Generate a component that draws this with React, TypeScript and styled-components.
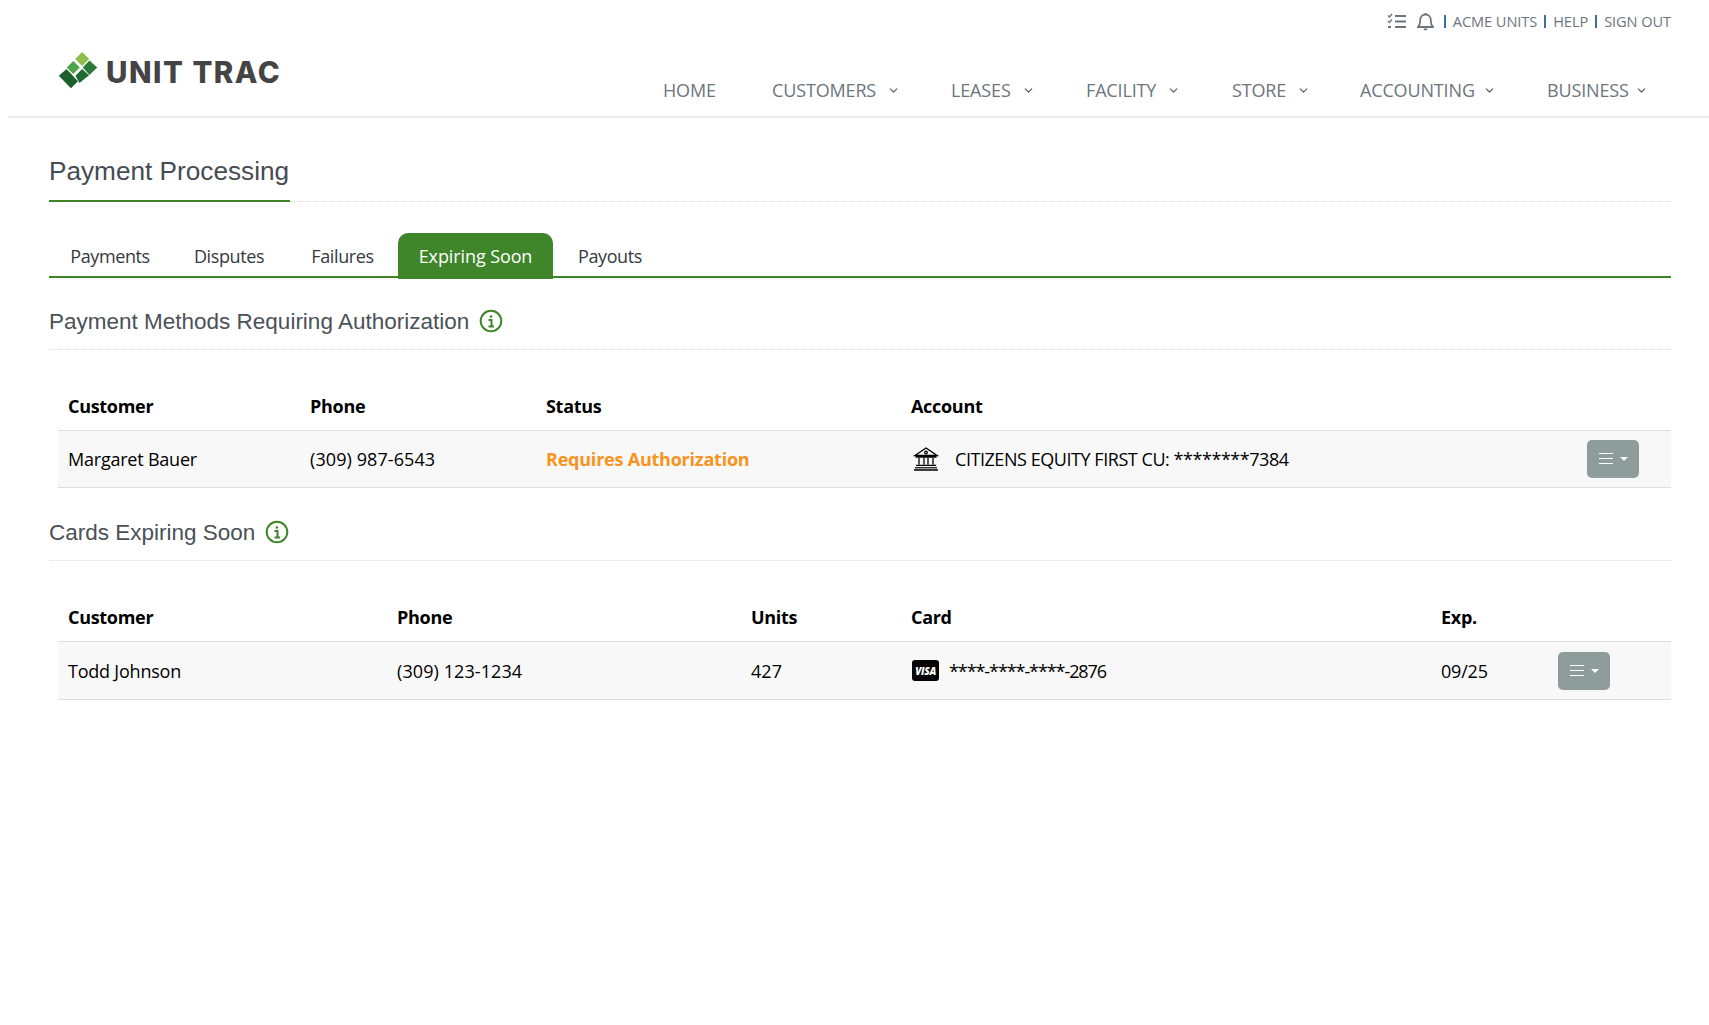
import styled, { createGlobalStyle } from "styled-components";
import { ChevronDown } from "lucide-react";

const GREEN = "#3e8629";
const BODY_FONT = '"Open Sans", "Noto Sans", sans-serif';
const HEAD_FONT = '"Liberation Sans", Arial, sans-serif';

const GlobalStyle = createGlobalStyle`
  html, body {
    margin: 0;
    padding: 0;
    background: #ffffff;
  }
  body {
    font-family: ${BODY_FONT};
    color: #000000;
  }
`;

const Page = styled.div`
  width: 1709px;
  height: 1025px;
  padding-left: 8px;
  box-sizing: border-box;
  overflow: hidden;
`;

const Header = styled.header`
  height: 116px;
  border-bottom: 2px solid #ececec;
  display: flex;
  flex-direction: column;
`;

const TopBar = styled.div`
  height: 42px;
  padding-right: 38px;
  display: flex;
  justify-content: flex-end;
  align-items: center;
  font-size: 14.6px;
  letter-spacing: -0.08px;
  color: #6c757d;
`;

const TopIcon = styled.svg`
  display: block;
  margin-right: 10px;
`;

const Pipe = styled.span`
  width: 2px;
  height: 13px;
  background: #3f6f9f;
  margin-right: 7px;
`;

const TopLink = styled.span`
  margin-right: 7px;
  &:last-child {
    margin-right: 0;
  }
`;

const MainRow = styled.div`
  flex: 1;
  display: flex;
  justify-content: space-between;
`;

const Logo = styled.div`
  margin: 9px 0 0 50px;
  height: 42px;
  display: flex;
  align-items: center;
  gap: 8px;
  font-family: "Inter", sans-serif;
  font-weight: 800;
  font-size: 29.5px;
  letter-spacing: 1.5px;
  color: #444444;
`;

const Nav = styled.nav`
  display: flex;
  align-items: flex-start;
  padding: 35px 58px 0 0;
`;

const NavItem = styled.div<{ $w: number; $gap: number }>`
  width: ${(p) => p.$w}px;
  display: flex;
  align-items: center;
  gap: ${(p) => p.$gap}px;
  font-size: 18px;
  line-height: 26px;
  letter-spacing: -0.15px;
  color: #6c757d;
  svg {
    color: #555555;
    flex: none;
  }
`;

const Content = styled.main`
  margin: 0 38px 0 41px;
`;

const TitleRow = styled.div`
  height: 84px;
  border-bottom: 1px dotted #dcdcdc;
  box-sizing: border-box;
  display: flex;
  align-items: flex-end;
`;

const Title = styled.h1`
  margin: 0 0 -1px;
  height: 44px;
  padding-right: 1px;
  border-bottom: 2px solid ${GREEN};
  font-family: ${HEAD_FONT};
  font-weight: 400;
  font-size: 26.2px;
  line-height: 30px;
  color: #454c53;
`;

const Tabs = styled.div`
  margin-top: 29px;
  height: 47px;
  border-bottom: 2px solid ${GREEN};
  box-sizing: border-box;
  display: flex;
  align-items: flex-end;
`;

const Tab = styled.div<{ $active?: boolean; $w: number }>`
  width: ${(p) => p.$w}px;
  height: 46px;
  margin-bottom: -3px;
  border-radius: 10px 10px 0 0;
  display: flex;
  justify-content: center;
  align-items: center;
  font-size: 18px;
  letter-spacing: ${(p) => (p.$active ? "-0.1px" : "-0.4px")};
  color: ${(p) => (p.$active ? "#ffffff" : "#343a40")};
  background: ${(p) => (p.$active ? GREEN : "transparent")};
`;

const SectionHead = styled.div<{ $top: number }>`
  margin-top: ${(p) => p.$top}px;
  height: 42px;
  border-bottom: 1px dotted #dcdcdc;
  box-sizing: border-box;
  display: flex;
  align-items: flex-start;
  gap: 10px;
  font-family: ${HEAD_FONT};
  font-size: 22.5px;
  line-height: 28px;
  color: #4a5157;
`;

const InfoIcon = styled.svg`
  display: block;
  margin-top: 1px;
`;

const Table = styled.table<{ $top: number }>`
  margin: ${(p) => p.$top}px 0 0 9px;
  width: calc(100% - 9px);
  border-collapse: collapse;
  table-layout: fixed;
  font-size: 18px;
  letter-spacing: -0.3px;
`;

const Th = styled.th<{ $w?: number }>`
  box-sizing: border-box;
  width: ${(p) => (p.$w ? `${p.$w}px` : "auto")};
  height: 48px;
  padding: 0 0 0 10px;
  text-align: left;
  font-weight: 700;
  border-bottom: 1px solid #dedede;
`;

const Td = styled.td<{ $warn?: boolean; $h: number; $ls?: number }>`
  box-sizing: border-box;
  height: ${(p) => p.$h}px;
  padding: 0 0 0 10px;
  background: #f8f8f8;
  border-bottom: 1px solid #dedede;
  letter-spacing: ${(p) => (p.$ls !== undefined ? `${p.$ls}px` : "inherit")};
  color: ${(p) => (p.$warn ? "#f7931e" : "#000000")};
  font-weight: ${(p) => (p.$warn ? 700 : 400)};
`;

const AccountCell = styled.div<{ $gap: number; $inset?: number }>`
  display: flex;
  align-items: center;
  gap: ${(p) => p.$gap}px;
  padding-left: ${(p) => p.$inset ?? 0}px;
`;

const ActionCell = styled.div<{ $pad: number }>`
  margin-left: auto;
  display: flex;
  justify-content: flex-end;
  padding-right: ${(p) => p.$pad}px;
`;

const MenuButton = styled.button`
  width: 52px;
  height: 38px;
  padding: 0;
  border: none;
  border-radius: 5px;
  background: #8f9c9c;
  display: flex;
  justify-content: center;
  align-items: center;
  gap: 6px;
`;

const Caret = styled.span`
  width: 0;
  height: 0;
  border-left: 4px solid transparent;
  border-right: 4px solid transparent;
  border-top: 4px solid #ffffff;
`;

const VisaBadge = styled.span`
  width: 27px;
  height: 21px;
  border-radius: 3px;
  background: #050505;
  color: #ffffff;
  display: flex;
  justify-content: center;
  align-items: center;
  font-size: 10px;
  font-weight: 800;
  font-style: italic;
  letter-spacing: -0.3px;
`;

const ChecklistIcon = () => (
  <TopIcon width="20" height="16" viewBox="0 0 20 16" fill="none" stroke="#6c757d" strokeWidth="1.8">
    <path d="M1 2.500l1.500 1.500L5 1M1 8l1.500 1.500L5 6.500" strokeWidth="1.400" />
    <path d="M1 14h3M8 3h11M8 8.500h11M8 14h11" />
  </TopIcon>
);

const BellIcon = () => (
  <TopIcon width="17" height="19" viewBox="0 0 17 19" fill="none" stroke="#6c757d" strokeWidth="1.800">
    <path d="M1 15h15c-1.600-1.600-2.200-3-2.200-6.500C13.800 5 11.600 2.500 8.500 2.500S3.200 5 3.200 8.500C3.200 12 2.600 13.400 1 15z" />
    <path d="M8.500 1v1.500M6.800 17.300h3.400" />
  </TopIcon>
);

const LogoMark = () => (
  <svg width="40" height="40" viewBox="0 0 36 36">
    <polygon points="21.700,0 28,6.300 21.700,12.600 15.400,6.300" fill="#8dbf4f" />
    <polygon points="13.700,8.200 19.600,14 13.700,19.800 7.900,14" fill="#4ba34a" />
    <polygon points="28.300,7.600 35.300,14 28.300,20.700 22.300,14" fill="#2a7a3a" />
    <polygon points="21.700,15.400 28,21 19.300,28 15.700,21.300" fill="#1f6c33" />
    <polygon points="7.700,15.400 18,26.300 11.700,32.600 0.700,21.300" fill="#1c602c" />
  </svg>
);

const Info = () => (
  <InfoIcon width="24" height="24" viewBox="0 0 24 24" fill="none" stroke={GREEN} strokeWidth="2">
    <circle cx="12" cy="12" r="10.300" />
    <circle cx="12" cy="7.500" r="1.300" fill={GREEN} stroke="none" />
    <path d="M9.500 11h3v6M9.500 17.500h5.500" />
  </InfoIcon>
);

const BankIcon = () => (
  <svg width="26" height="25" viewBox="0 0 26 25" fill="none" stroke="#000000" strokeWidth="1.300">
    <path d="M2 9.500L13 2l11 7.500zM2.500 11h21" />
    <circle cx="13" cy="6.500" r="1.300" />
    <path d="M6 12v6.500M11 12v6.500M15 12v6.500M20 12v6.500M3 19.300h20" />
    <path d="M1 24h24" strokeWidth="1.500" />
    <path d="M2 21.800h22" strokeWidth="1.200" />
  </svg>
);

const MenuBars = () => (
  <svg width="16" height="13" viewBox="0 0 16 13" stroke="#ffffff" strokeWidth="1.200" fill="none">
    <path d="M1 1.500h14M1 6.500h14M1 11.500h14" />
  </svg>
);

const ActionMenu = () => (
  <MenuButton type="button" aria-label="Actions">
    <MenuBars />
    <Caret />
  </MenuButton>
);

const navItems = [
  { label: "HOME", w: 109 },
  { label: "CUSTOMERS", w: 179, gap: 11 },
  { label: "LEASES", w: 135, gap: 11 },
  { label: "FACILITY", w: 146, gap: 11 },
  { label: "STORE", w: 128, gap: 11 },
  { label: "ACCOUNTING", w: 187, gap: 8 },
  { label: "BUSINESS", w: 104, gap: 6 },
];

const tabItems = [
  { label: "Payments", w: 122 },
  { label: "Disputes", w: 116 },
  { label: "Failures", w: 111 },
  { label: "Expiring Soon", w: 155, active: true },
  { label: "Payouts", w: 114 },
];

export default function App() {
  return (
    <>
      <GlobalStyle />
      <Page>
        <Header>
          <TopBar>
            <ChecklistIcon />
            <BellIcon />
            <Pipe />
            <TopLink>ACME UNITS</TopLink>
            <Pipe />
            <TopLink>HELP</TopLink>
            <Pipe />
            <TopLink>SIGN OUT</TopLink>
          </TopBar>
          <MainRow>
            <Logo>
              <LogoMark />
              UNIT TRAC
            </Logo>
            <Nav>
              {navItems.map((item) => (
                <NavItem key={item.label} $w={item.w} $gap={item.gap ?? 0}>
                  {item.label}
                  {item.gap ? <ChevronDown size={13} strokeWidth={2} /> : null}
                </NavItem>
              ))}
            </Nav>
          </MainRow>
        </Header>
        <Content>
          <TitleRow>
            <Title>Payment Processing</Title>
          </TitleRow>
          <Tabs>
            {tabItems.map((tab) => (
              <Tab key={tab.label} $w={tab.w} $active={tab.active}>
                {tab.label}
              </Tab>
            ))}
          </Tabs>
          <SectionHead $top={30}>
            Payment Methods Requiring Authorization
            <Info />
          </SectionHead>
          <Table $top={32}>
            <thead>
              <tr>
                <Th $w={242}>Customer</Th>
                <Th $w={236}>Phone</Th>
                <Th $w={365}>Status</Th>
                <Th>Account</Th>
              </tr>
            </thead>
            <tbody>
              <tr>
                <Td $h={57} $ls={-0.22}>Margaret Bauer</Td>
                <Td $h={57} $ls={0.08}>(309) 987-6543</Td>
                <Td $h={57} $ls={-0.22} $warn>
                  Requires Authorization
                </Td>
                <Td $h={57} $ls={-0.45}>
                  <AccountCell $gap={16} $inset={2}>
                    <BankIcon />
                    CITIZENS EQUITY FIRST CU: ********7384
                    <ActionCell $pad={32}>
                      <ActionMenu />
                    </ActionCell>
                  </AccountCell>
                </Td>
              </tr>
            </tbody>
          </Table>
          <SectionHead $top={31}>
            Cards Expiring Soon
            <Info />
          </SectionHead>
          <Table $top={33}>
            <thead>
              <tr>
                <Th $w={329}>Customer</Th>
                <Th $w={354}>Phone</Th>
                <Th $w={160}>Units</Th>
                <Th $w={530}>Card</Th>
                <Th>Exp.</Th>
              </tr>
            </thead>
            <tbody>
              <tr>
                <Td $h={58} $ls={-0.22}>Todd Johnson</Td>
                <Td $h={58} $ls={0.08}>(309) 123-1234</Td>
                <Td $h={58} $ls={0.08}>427</Td>
                <Td $h={58} $ls={-1.08}>
                  <AccountCell $gap={10} $inset={1}>
                    <VisaBadge>VISA</VisaBadge>
                    ****-****-****-2876
                  </AccountCell>
                </Td>
                <Td $h={58} $ls={-0.2}>
                  <AccountCell $gap={0}>
                    09/25
                    <ActionCell $pad={61}>
                      <ActionMenu />
                    </ActionCell>
                  </AccountCell>
                </Td>
              </tr>
            </tbody>
          </Table>
        </Content>
      </Page>
    </>
  );
}
